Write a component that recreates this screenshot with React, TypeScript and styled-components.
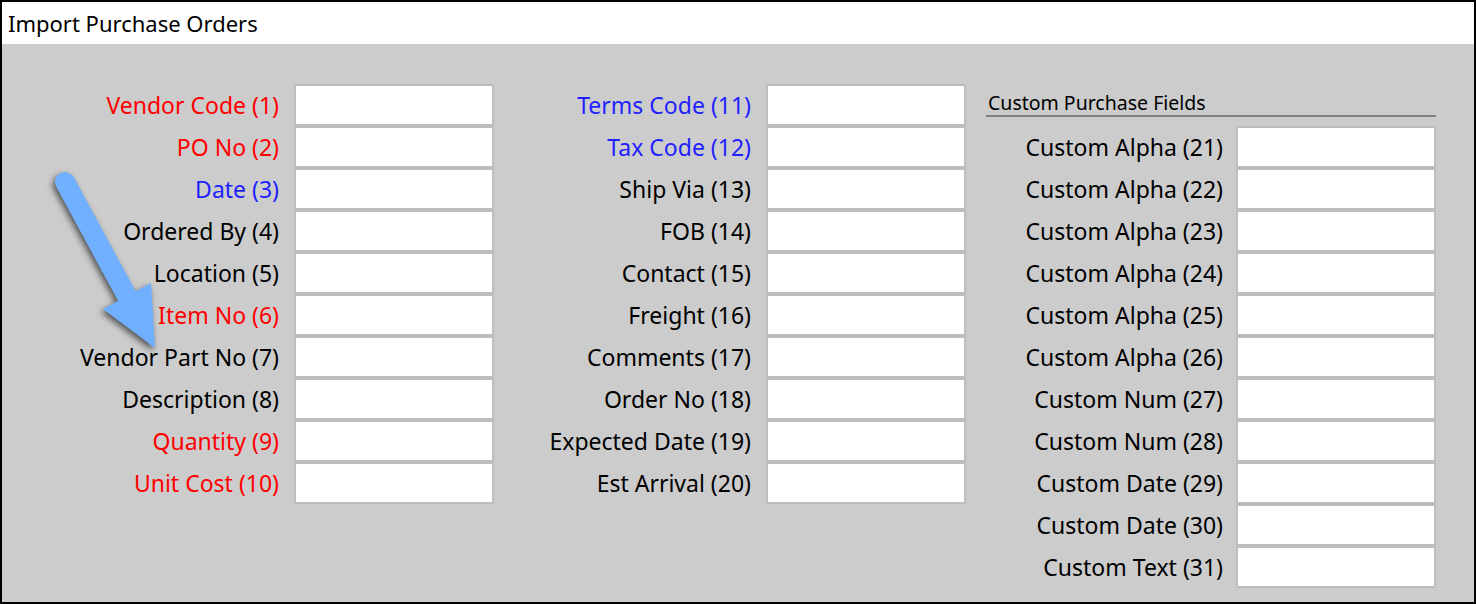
import React from "react";
import styled, { createGlobalStyle } from "styled-components";

const GlobalStyle = createGlobalStyle`
  html, body {
    margin: 0;
    padding: 0;
    background: #ffffff;
  }
  body {
    font-family: "Noto Sans", "Open Sans", sans-serif;
  }
`;

type Tone = "required" | "mapped" | "plain";

const toneColor: Record<Tone, string> = {
  required: "#ff0000",
  mapped: "#1f1fff",
  plain: "#000000",
};

const Window = styled.div`
  position: relative;
  width: 1476px;
  height: 604px;
  box-sizing: border-box;
  border: 2px solid #000;
  display: flex;
  flex-direction: column;
`;

const TitleBar = styled.div`
  height: 42px;
  flex: none;
  background: #fff;
  padding-left: 6px;
  display: flex;
  align-items: center;
  font-size: 22px;
  color: #000;
`;

const Body = styled.div`
  position: relative;
  flex: 1;
  background: #cccccc;
  padding-top: 40px;
  display: flex;
  align-items: flex-start;
`;

const FieldGrid = styled.div<{ labelWidth: number; gap: number }>`
  display: grid;
  grid-template-columns: ${({ labelWidth }) => labelWidth}px 200px;
  grid-auto-rows: 42px;
  column-gap: ${({ gap }) => gap}px;
  align-items: center;
`;

const Label = styled.div<{ tone: Tone }>`
  text-align: right;
  font-size: 23px;
  white-space: nowrap;
  color: ${({ tone }) => toneColor[tone]};
`;

const Input = styled.div`
  box-sizing: border-box;
  height: 42px;
  width: 200px;
  background: #fff;
  border: 2px solid #bebebe;
`;

const CustomColumn = styled.div`
  display: flex;
  flex-direction: column;
`;

const GroupHeader = styled.div`
  margin-left: 20px;
  width: 450px;
  box-sizing: border-box;
  height: 33px;
  border-bottom: 2px solid #808080;
  margin-bottom: 9px;
  padding-left: 2px;
  padding-bottom: 0;
  display: flex;
  align-items: flex-end;
  font-size: 19.5px;
  line-height: 24px;
  color: #000;
`;

const ArrowLayer = styled.svg`
  position: absolute;
  left: 0;
  top: 0;
  overflow: visible;
  filter: drop-shadow(-2px 3px 3px rgba(0, 0, 0, 0.6));
`;

type Field = [string, Tone];

const col1: Field[] = [
  ["Vendor Code (1)", "required"],
  ["PO No (2)", "required"],
  ["Date (3)", "mapped"],
  ["Ordered By (4)", "plain"],
  ["Location (5)", "plain"],
  ["Item No (6)", "required"],
  ["Vendor Part No (7)", "plain"],
  ["Description (8)", "plain"],
  ["Quantity (9)", "required"],
  ["Unit Cost (10)", "required"],
];

const col2: Field[] = [
  ["Terms Code (11)", "mapped"],
  ["Tax Code (12)", "mapped"],
  ["Ship Via (13)", "plain"],
  ["FOB (14)", "plain"],
  ["Contact (15)", "plain"],
  ["Freight (16)", "plain"],
  ["Comments (17)", "plain"],
  ["Order No (18)", "plain"],
  ["Expected Date (19)", "plain"],
  ["Est Arrival (20)", "plain"],
];

const col3: Field[] = [
  ["Custom Alpha (21)", "plain"],
  ["Custom Alpha (22)", "plain"],
  ["Custom Alpha (23)", "plain"],
  ["Custom Alpha (24)", "plain"],
  ["Custom Alpha (25)", "plain"],
  ["Custom Alpha (26)", "plain"],
  ["Custom Num (27)", "plain"],
  ["Custom Num (28)", "plain"],
  ["Custom Date (29)", "plain"],
  ["Custom Date (30)", "plain"],
  ["Custom Text (31)", "plain"],
];

const Fields: React.FC<{ fields: Field[]; labelWidth: number; gap: number }> = ({
  fields,
  labelWidth,
  gap,
}) => (
  <FieldGrid labelWidth={labelWidth} gap={gap}>
    {fields.map(([text, tone]) => (
      <React.Fragment key={text}>
        <Label tone={tone}>{text}</Label>
        <Input />
      </React.Fragment>
    ))}
  </FieldGrid>
);

const Arrow = () => (
  <ArrowLayer width="200" height="320">
    <line
      x1="63"
      y1="138"
      x2="127"
      y2="256"
      stroke="#70b0ff"
      strokeWidth="20"
      strokeLinecap="round"
    />
    <polygon points="101,265 149,239 153,304" fill="#70b0ff" />
  </ArrowLayer>
);

export default function App() {
  return (
    <>
      <GlobalStyle />
      <Window>
        <TitleBar>Import Purchase Orders</TitleBar>
        <Body>
          <Fields fields={col1} labelWidth={277} gap={15} />
          <Fields fields={col2} labelWidth={257} gap={15} />
          <CustomColumn>
            <GroupHeader>Custom Purchase Fields</GroupHeader>
            <Fields fields={col3} labelWidth={257} gap={13} />
          </CustomColumn>
          <Arrow />
        </Body>
      </Window>
    </>
  );
}
